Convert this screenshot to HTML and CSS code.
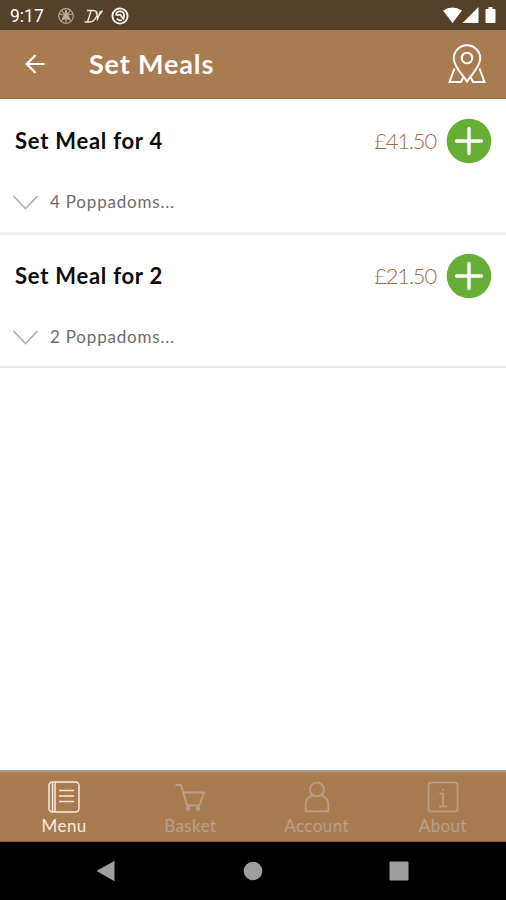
FILE: index.html
```html
<!DOCTYPE html>
<html lang="en">
<head>
<meta charset="utf-8">
<title>Set Meals</title>
<link rel="stylesheet" href="styles.css">
</head>
<body>
<div class="screen">
  <div class="status">
    <span class="clock">9:17</span>
    <svg class="notices" width="74" height="20" viewBox="0 0 74 20" fill="none">
      <g stroke="#b9ad9e" stroke-width="1.2">
        <circle cx="9" cy="10" r="7.3"/>
        <path d="M9 4v12M2.500 8l4 1M15.500 8l-4 1M4.500 14.500l3-3M13.500 14.500l-3-3M5 5l2 3M13 5l-2 3"/>
        <path d="M9 5l3.500 8h-7z" fill="#b9ad9e"/>
      </g>
      <path d="M30 4.500h6c4 0 5 2.500 3.500 6s-4 5.500-7 5.500h-5M34 5l-3.500 11M39 5.500l1.500 6 5-7M40 14.500l3.500-9.500" stroke="#ece5dd" stroke-width="1.400"/>
      <g stroke="#fff">
        <circle cx="63" cy="10" r="7.600" stroke-width="1.800"/>
        <path d="M59 9.500c0-5 7-5.500 8-1 .5 2 0 3.500-1 4.500M59.500 9.500c3-1.500 4.500-.5 5 1l2.500 3M60 12.500c1 1.800 3.500 2.300 5 1.500" stroke-width="1.700"/>
      </g>
    </svg>
    <svg class="signals" width="56" height="20" viewBox="0 0 56 20" fill="#fff">
      <path d="M0 4.500Q9.500-1.500 19 4.500L9.500 17zM35.500 1v16H19.500zM43.500 3h2V1h4v2h2q1 0 1 1v12q0 1-1 1h-8q-1 0-1-1V4q0-1 1-1z"/>
    </svg>
  </div>
  <header class="header">
    <svg class="back" width="20" height="20" viewBox="0 0 20 20" fill="none" stroke="#fff" stroke-width="2.200"><path d="M19.500 10H2M10.500 1.200L1.700 10l8.800 8.800"/></svg>
    <h1 class="title">Set Meals</h1>
    <svg class="pin" width="38" height="40" viewBox="0 0 38 40" fill="none" stroke="#fff" stroke-width="2">
      <path d="M19 37.500C15 31 5.800 23 5.800 14.500a13.200 13.200 0 0 1 26.400 0C32.200 23 23 31 19 37.500z"/>
      <circle cx="19" cy="14" r="5.300"/>
      <path d="M6.500 24.500L1.500 38h11.500l2.500-5M31.500 24.500l5 13.500H25l-2.500-5"/>
    </svg>
  </header>
  <main class="list">
    <article class="meal">
      <div class="line">
        <h2 class="name">Set Meal for 4</h2>
        <span class="price">£41.50</span>
        <svg class="add" width="46" height="46" viewBox="0 0 46 46"><circle cx="23" cy="23" r="22.300" fill="#67ad36"/><path d="M23 10.500v25M10.500 23h25" stroke="#fff" stroke-width="3.400" stroke-linecap="round"/></svg>
      </div>
      <div class="detail">
        <svg class="chevron" width="25" height="15" viewBox="0 0 25 15" fill="none" stroke="#b0b0b0" stroke-width="1.700"><path d="M.5 1l12 12.500 12-12.500"/></svg>
        <span class="desc">4 Poppadoms...</span>
      </div>
    </article>
    <article class="meal last">
      <div class="line">
        <h2 class="name">Set Meal for 2</h2>
        <span class="price">£21.50</span>
        <svg class="add" width="46" height="46" viewBox="0 0 46 46"><circle cx="23" cy="23" r="22.300" fill="#67ad36"/><path d="M23 10.500v25M10.500 23h25" stroke="#fff" stroke-width="3.400" stroke-linecap="round"/></svg>
      </div>
      <div class="detail">
        <svg class="chevron" width="25" height="15" viewBox="0 0 25 15" fill="none" stroke="#b0b0b0" stroke-width="1.700"><path d="M.5 1l12 12.500 12-12.500"/></svg>
        <span class="desc">2 Poppadoms...</span>
      </div>
    </article>
  </main>
  <nav class="tabs">
    <div class="tab active">
      <svg width="32" height="32" viewBox="0 0 32 32" fill="none" stroke="currentColor" stroke-width="1.500"><rect x="1" y="1" width="30" height="30" rx="3.500"/><path d="M4.500 1v30M7 1v30M11 9.500h15M11 15h15M11 20.500h15"/></svg>
      <span>Menu</span>
    </div>
    <div class="tab">
      <svg width="32" height="32" viewBox="0 0 32 32" fill="none" stroke="currentColor" stroke-width="1.800"><path d="M1.500 4h5.500l6 20.500h12.500M9 11.500h21l-4.500 13"/><circle cx="14" cy="27.500" r="1.300"/><circle cx="24" cy="27.500" r="1.300"/></svg>
      <span>Basket</span>
    </div>
    <div class="tab">
      <svg width="32" height="32" viewBox="0 0 32 32" fill="none" stroke="currentColor" stroke-width="1.700"><circle cx="16" cy="8.500" r="7"/><path d="M11.500 14C7 16 4.700 20 4.700 24v6.300h22.600V24c0-4-2.300-8-6.800-10"/></svg>
      <span>Account</span>
    </div>
    <div class="tab">
      <svg width="32" height="32" viewBox="0 0 32 32" fill="none" stroke="currentColor" stroke-width="1.700"><rect x="1.500" y="1.500" width="29" height="29" rx="2.500"/><path d="M12.500 12.500H16v13M12 25.500h8M15 8.500h2"/></svg>
      <span>About</span>
    </div>
  </nav>
  <div class="system">
    <svg width="20" height="22" viewBox="0 0 20 22"><path d="M.5 11L18.500.8v20.400z" fill="#9e9e9e"/></svg>
    <svg width="20" height="20" viewBox="0 0 20 20"><circle cx="10" cy="10" r="9.300" fill="#9e9e9e"/></svg>
    <svg width="20" height="20" viewBox="0 0 20 20"><rect x=".5" y=".5" width="19" height="19" rx="1" fill="#9e9e9e"/></svg>
  </div>
</div>
</body>
</html>
```
FILE: styles.css
```css
* { box-sizing: border-box; }
body { margin: 0; font-family: Lato, "Liberation Sans", sans-serif; }
svg { display: block; flex: none; }
h1, h2 { margin: 0; }
span, h1, h2 { white-space: nowrap; }

.screen { width: 506px; height: 900px; display: flex; flex-direction: column; background: #fff; }

.status { height: 30px; background: #554029; display: flex; align-items: center; padding: 1px 7px 0 10px; color: #fff; }
.clock { font: 17.5px/20px Roboto, sans-serif; width: 47px; }
.signals { margin-left: auto; }

.header { height: 69px; background: #a87c50; border-bottom: 1px solid #9b6c3d; display: flex; align-items: center; padding: 0 20px 0 25px; color: #fff; }
.title { font-size: 27px; line-height: 34px; font-weight: 700; margin-left: 44px; letter-spacing: .85px; }
.pin { margin-left: auto; }

.list { flex: 1; }
.meal { height: 136px; border-bottom: 3px solid #eee; padding: 19px 14px 0 15px; }
.meal.last { height: 133px; border-bottom: 2px solid #e4e4e4; padding-top: 18px; }
.line { height: 46px; display: flex; align-items: center; }
.name { font-size: 22px; line-height: 28px; font-weight: 700; letter-spacing: .75px; color: #0a0a0a; }
.price { margin-left: auto; margin-right: 10px; font-size: 22px; line-height: 28px; font-weight: 300; letter-spacing: -1.2px; color: #a8683a; }
.detail { display: flex; align-items: center; height: 24px; margin-top: 26px; margin-left: -2px; }
.desc { margin-left: 12px; font-size: 17px; line-height: 24px; letter-spacing: .8px; color: #6c6c6c; }

.tabs { height: 72px; background: #a87c50; border-top: 2px solid #ad9a87; border-bottom: 1px solid #805b35; display: flex; padding-left: 1px; }
.tab { flex: 1; display: flex; flex-direction: column; align-items: center; padding-top: 9px; color: #b99f8b; }
.tab span { font-size: 17px; line-height: 22px; margin-top: 2px; letter-spacing: .4px; }
.tab.active { color: #fbe9da; }

.system { height: 58px; background: #000; display: flex; align-items: center; justify-content: space-between; padding: 0 97px 0 96px; }
```
